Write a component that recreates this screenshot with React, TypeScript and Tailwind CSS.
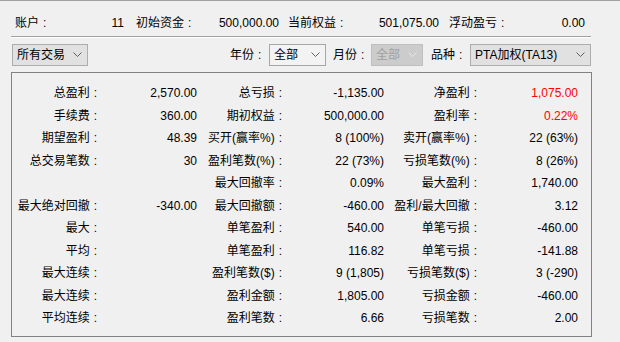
import React from "react";

type Cell = { label: string; value: string; red?: boolean };

const rows: Cell[][] = [
  [
    { label: "总盈利", value: "2,570.00" },
    { label: "总亏损", value: "-1,135.00" },
    { label: "净盈利", value: "1,075.00", red: true },
  ],
  [
    { label: "手续费", value: "360.00" },
    { label: "期初权益", value: "500,000.00" },
    { label: "盈利率", value: "0.22%", red: true },
  ],
  [
    { label: "期望盈利", value: "48.39" },
    { label: "买开(赢率%)", value: "8 (100%)" },
    { label: "卖开(赢率%)", value: "22 (63%)" },
  ],
  [
    { label: "总交易笔数", value: "30" },
    { label: "盈利笔数(%)", value: "22 (73%)" },
    { label: "亏损笔数(%)", value: "8 (26%)" },
  ],
  [
    { label: "", value: "" },
    { label: "最大回撤率", value: "0.09%" },
    { label: "最大盈利", value: "1,740.00" },
  ],
  [
    { label: "最大绝对回撤", value: "-340.00" },
    { label: "最大回撤额", value: "-460.00" },
    { label: "盈利/最大回撤", value: "3.12" },
  ],
  [
    { label: "最大", value: "" },
    { label: "单笔盈利", value: "540.00" },
    { label: "单笔亏损", value: "-460.00" },
  ],
  [
    { label: "平均", value: "" },
    { label: "单笔盈利", value: "116.82" },
    { label: "单笔亏损", value: "-141.88" },
  ],
  [
    { label: "最大连续", value: "" },
    { label: "盈利笔数($)", value: "9 (1,805)" },
    { label: "亏损笔数($)", value: "3 (-290)" },
  ],
  [
    { label: "最大连续", value: "" },
    { label: "盈利金额", value: "1,805.00" },
    { label: "亏损金额", value: "-460.00" },
  ],
  [
    { label: "平均连续", value: "" },
    { label: "盈利笔数", value: "6.66" },
    { label: "亏损笔数", value: "2.00" },
  ],
];

// 标签 + 半角冒号（冒号与文字之间留点空）
function Label({ text }: { text: string }) {
  if (!text) return null;
  return (
    <>
      {text}
      <span className="ml-[4px] mr-[1px]">:</span>
    </>
  );
}

function Chevron({ disabled }: { disabled?: boolean }) {
  return (
    <svg width="9" height="6" viewBox="0 0 9 6" className="shrink-0">
      <polyline
        points="0.5,0.5 4.5,4.5 8.5,0.5"
        fill="none"
        stroke={disabled ? "#e8e8e8" : "#606060"}
        strokeWidth="1"
      />
    </svg>
  );
}

function Combo({
  text,
  width,
  variant = "grey",
}: {
  text: string;
  width: string;
  variant?: "grey" | "light" | "disabled";
}) {
  const styles =
    variant === "grey"
      ? "bg-[#e1e1e1] border-[#adadad] text-black"
      : variant === "light"
      ? "bg-[#f3f3f3] border-[#a6a6a6] text-black"
      : "bg-[#cccccc] border-[#bfbfbf] text-[#a0a0a0]";
  return (
    <div className={`${width} h-[22px] border ${styles} flex items-center justify-between pl-[4px] pr-[5px]`}>
      <span>{text}</span>
      <Chevron disabled={variant === "disabled"} />
    </div>
  );
}

export default function App() {
  return (
    <div
      className="w-[620px] h-[342px] bg-[#f0f0f0] border-t border-[#a0a0a0] text-[12px] text-black overflow-hidden"
      style={{ fontFamily: '"Liberation Sans", "Noto Sans CJK SC", sans-serif' }}
    >
      {/* 账户信息 */}
      <div className="flex items-center h-[35px] pt-[8px] pl-[15px] leading-none">
        <span className="w-[50px]"><Label text="账户" /></span>
        <span className="w-[59px] text-right">11</span>
        <span className="w-[70px] ml-[12px]"><Label text="初始资金" /></span>
        <span className="w-[73px] text-right">500,000.00</span>
        <span className="w-[70px] ml-[9px]"><Label text="当前权益" /></span>
        <span className="w-[81px] text-right">501,075.00</span>
        <span className="w-[70px] ml-[10px]"><Label text="浮动盈亏" /></span>
        <span className="w-[66px] text-right">0.00</span>
      </div>
      <div className="ml-[11px] w-[580px] border-t border-[#a0a0a0] border-b border-b-white" />

      {/* 筛选 */}
      <div className="flex items-center mt-[6px] ml-[12px] w-[579px]">
        <Combo text="所有交易" width="w-[76px]" />
        <div className="ml-auto flex items-center">
          <span className="w-[39px]"><Label text="年份" /></span>
          <Combo text="全部" width="w-[57px]" variant="light" />
          <span className="w-[38px] ml-[7px]"><Label text="月份" /></span>
          <Combo text="全部" width="w-[52px]" variant="disabled" />
          <span className="w-[39px] ml-[8px]"><Label text="品种" /></span>
          <Combo text="PTA加权(TA13)" width="w-[121px]" />
        </div>
      </div>

      {/* 统计 */}
      <div className="ml-[11px] mt-[6px] w-[581px] h-[265px] border border-[#828282] pt-[9px]">
        <div className="grid grid-cols-[86px_99px_86px_101px_94px_100px] auto-rows-[22.5px] leading-none">
          {rows.map((row, i) =>
            row.map((c, j) => (
              <React.Fragment key={`${i}-${j}`}>
                <div className="flex items-center justify-end whitespace-nowrap">
                  <Label text={c.label} />
                </div>
                <div
                  className={`flex items-center justify-end whitespace-nowrap ${
                    c.red ? "text-[#ff0000]" : ""
                  }`}
                >
                  {c.value}
                </div>
              </React.Fragment>
            ))
          )}
        </div>
      </div>
    </div>
  );
}
